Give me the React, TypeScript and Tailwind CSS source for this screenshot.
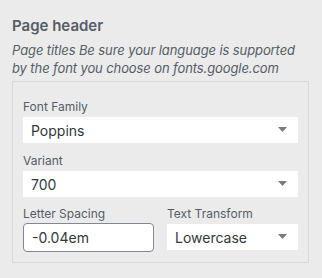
import React from "react";

function Arrow() {
  return (
    <svg width="9" height="6" viewBox="0 0 9 6" className="absolute right-[11px] top-1/2 -translate-y-1/2">
      <path d="M0 0 L9 0 L4.5 5 Z" fill="#7a7a7a" />
    </svg>
  );
}

function Select({ value }: { value: string }) {
  return (
    <div className="relative h-[26px] bg-white flex items-center pl-[8px] text-[14px] text-[#32373c]">
      {value}
      <Arrow />
    </div>
  );
}

export default function App() {
  return (
    <div className="w-[322px] h-[278px] bg-[#ebebeb] px-[12px] pt-[18px]" style={{ fontFamily: "Inter, 'Liberation Sans', sans-serif" }}>
      <div className="text-[15px] font-semibold text-[#555d66] leading-[16px]">Page header</div>
      <div className="mt-[7px] text-[13px] italic text-[#555d66] leading-[18px] tracking-[-0.1px]">
        Page titles Be sure your language is supported by the font you choose on fonts.google.com
      </div>
      <div className="mt-[4px] border border-[#d8d8d8] px-[10px] pt-[18px] pb-[10px] w-[297px]">
        <div className="text-[12px] text-[#555d66] leading-[14px] mb-[3px]">Font Family</div>
        <Select value="Poppins" />
        <div className="text-[12px] text-[#555d66] leading-[14px] mt-[11px] mb-[3px]">Variant</div>
        <Select value="700" />
        <div className="flex gap-[13px] mt-[10px]">
          <div className="w-[131px]">
            <div className="text-[12px] text-[#555d66] leading-[14px] mb-[2px]">Letter Spacing</div>
            <div className="h-[29px] bg-white border border-[#7e8993] rounded-[4px] flex items-center pl-[8px] text-[14px] text-[#32373c]">-0.04em</div>
          </div>
          <div className="flex-1">
            <div className="text-[12px] text-[#555d66] leading-[14px] mb-[3px]">Text Transform</div>
            <Select value="Lowercase" />
          </div>
        </div>
      </div>
    </div>
  );
}
